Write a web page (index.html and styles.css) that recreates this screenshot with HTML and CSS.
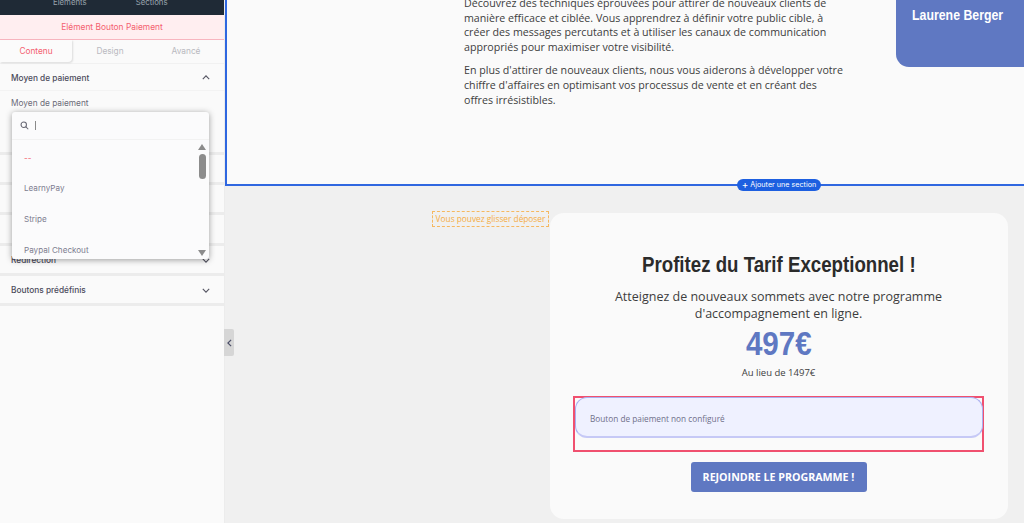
FILE: index.html
```html
<!DOCTYPE html>
<html lang="fr">
<head>
<meta charset="utf-8">
<title>Éditeur</title>
<link rel="stylesheet" href="styles.css">
</head>
<body>
<div class="app">
  <aside class="sidebar">
    <div class="topnav"><span>Eléments</span><span>Sections</span></div>
    <div class="banner">Elément Bouton Paiement</div>
    <div class="tabs">
      <div class="tab active">Contenu</div>
      <div class="tab">Design</div>
      <div class="tab">Avancé</div>
    </div>
    <div class="acc open">
      <span>Moyen de paiement</span>
      <svg class="chev" viewBox="0 0 10 6"><path d="M1 5l4-4 4 4"/></svg>
    </div>
    <div class="field">Moyen de paiement</div>
    <div class="row h1"></div>
    <div class="row"></div>
    <div class="row"></div>
    <div class="row"></div>
    <div class="row acc"><span>Redirection</span><svg class="chev" viewBox="0 0 10 6"><path d="M1 1l4 4 4-4"/></svg></div>
    <div class="row acc"><span>Boutons prédéfinis</span><svg class="chev" viewBox="0 0 10 6"><path d="M1 1l4 4 4-4"/></svg></div>

    <div class="dropdown">
      <div class="search">
        <svg class="mag" viewBox="0 0 12 12"><circle cx="5" cy="5" r="3.6"/><path d="M7.6 7.6L11 11"/></svg>
        <span class="caret"></span>
      </div>
      <div class="list">
        <div class="opt none">--</div>
        <div class="opt">LearnyPay</div>
        <div class="opt">Stripe</div>
        <div class="opt">Paypal Checkout</div>
      </div>
      <div class="scroll">
        <span class="arrow up"></span>
        <span class="thumb"></span>
        <span class="arrow down"></span>
      </div>
    </div>
  </aside>

  <main class="canvas">
    <button class="toggle" type="button" aria-label="Réduire">
      <svg viewBox="0 0 6 10"><path d="M5 1L1 5l4 4"/></svg>
    </button>
    <section class="top">
      <div class="copy">
        <p>Découvrez des techniques éprouvées pour attirer de nouveaux clients de manière efficace et ciblée. Vous apprendrez à définir votre public cible, à créer des messages percutants et à utiliser les canaux de communication appropriés pour maximiser votre visibilité.</p>
        <p>En plus d'attirer de nouveaux clients, nous vous aiderons à développer votre chiffre d'affaires en optimisant vos processus de vente et en créant des offres irrésistibles.</p>
      </div>
      <div class="person"><span class="narrow">Laurene Berger</span></div>
      <div class="add"><span class="plus">+</span> Ajouter une section</div>
    </section>
    <section class="lower">
      <div class="tag">Vous pouvez glisser déposer</div>
      <div class="card">
        <h2>Profitez du Tarif Exceptionnel !</h2>
        <p class="sub">Atteignez de nouveaux sommets avec notre programme d'accompagnement en ligne.</p>
        <div class="price">497€</div>
        <div class="old">Au lieu de 1497€</div>
        <div class="frame"><div class="paybox">Bouton de paiement non configuré</div></div>
        <a class="cta">REJOINDRE LE PROGRAMME !</a>
      </div>
    </section>
  </main>
</div>
</body>
</html>
```
FILE: styles.css
```css
* { box-sizing: border-box; }
html, body { margin: 0; height: 100%; overflow: hidden; }
body { font-family: "Open Sans", sans-serif; background: #f0f0f0; }
.app { display: flex; height: 523px; }

.sidebar {
  position: relative;
  flex: 0 0 225px;
  background: #fafafa;
  border-right: 1px solid #ececec;
  font-family: Inter, sans-serif;
  font-size: 8.3px;
  color: #50505f;
}
.topnav {
  height: 15px;
  background: #1f2a36;
  color: #9aa3ad;
  display: flex;
  line-height: 5px;
  padding-left: 53px;
  gap: 49px;
  font-size: 7.8px;
  overflow: hidden;
}
.banner {
  height: 25px;
  background: #ffeef0;
  border-bottom: 1px solid #f8b5bf;
  color: #f4606f;
  text-align: center;
  line-height: 24px;
  font-size: 8.4px;
}
.tabs { display: flex; height: 24px; border-bottom: 1px solid #f1f1f1; }
.tab { flex: 0 0 76px; text-align: center; line-height: 22px; color: #b9b9c0; }
.tab.active {
  flex-basis: 72px;
  color: #f4606f;
  background: #fbfbfb;
  border-radius: 0 0 4px 0;
  box-shadow: 1px 1px 2px rgba(0, 0, 0, .12);
  height: 22px;
}
.acc {
  display: flex;
  align-items: center;
  justify-content: space-between;
  padding: 0 14px 0 11px;
  font-weight: 500;
  font-size: 8.3px;
  color: #4b4b5a;
}
.acc.open { height: 27px; padding-top: 1px; border-bottom: 1px solid #f3f3f3; }
.chev { width: 8px; height: 5px; fill: none; stroke: #555562; stroke-width: 1.4; }
.field { height: 40px; padding: 7px 11px 0; color: #6b6b78; }
.row { height: 30.2px; border-bottom: 3px solid #ececec; }
.row.h1 { height: 24px; }
.row.acc { padding-top: 2px; }

.dropdown {
  position: absolute;
  left: 12px;
  top: 112px;
  width: 197px;
  height: 147px;
  background: #fbfbfc;
  border-radius: 3px;
  box-shadow: 0 1px 6px rgba(0, 0, 0, .38);
  overflow: hidden;
}
.search {
  display: flex;
  align-items: center;
  gap: 6px;
  height: 28px;
  padding-left: 8px;
  border-bottom: 1px solid #f2f2f2;
}
.mag { width: 9px; height: 9px; fill: none; stroke: #666672; stroke-width: 1.4; }
.caret { width: 1px; height: 9px; background: #8a8a8a; }
.opt { height: 31px; padding-left: 12px; line-height: 31px; font-size: 8.1px; color: #7d7d90; }
.opt.none { color: #f4606f; line-height: 33px; }
.list { padding-top: 2px; }
.scroll {
  position: absolute;
  right: 1px;
  top: 28px;
  bottom: 0;
  width: 12px;
  display: flex;
  flex-direction: column;
  align-items: center;
}
.arrow { width: 0; height: 0; border-left: 4px solid transparent; border-right: 4px solid transparent; }
.arrow.up { border-bottom: 6px solid #8c8c8c; margin-top: 4px; }
.arrow.down { border-top: 6px solid #8c8c8c; margin-top: auto; margin-bottom: 3px; }
.thumb { width: 7px; height: 25px; border-radius: 4px; background: #8c8c8c; margin-top: 4px; }

.canvas { position: relative; flex: 1; min-width: 0; }
.toggle {
  position: absolute;
  left: -1px;
  top: 329px;
  width: 10px;
  height: 27px;
  padding: 0;
  border: 0;
  border-radius: 0 2px 2px 0;
  background: #d6d6d6;
  display: flex;
  align-items: center;
  justify-content: center;
  z-index: 2;
}
.toggle svg { width: 5px; height: 8px; fill: none; stroke: #4c4f68; stroke-width: 1.5; }

.top {
  position: relative;
  height: 186px;
  background: #fafafa;
  border-left: 2px solid #2f67e0;
  border-bottom: 2px solid #2f67e0;
  display: flex;
  justify-content: space-between;
  align-items: flex-start;
  padding-left: 237px;
}
.copy {
  width: 384px;
  margin-top: -4px;
  font-size: 10.67px;
  line-height: 14.6px;
  color: #3d3d3d;
}
.copy p { margin: 0 0 9px; }
.person {
  width: 128px;
  height: 67px;
  padding-right: 4px;
  background: #5f78c2;
  border-radius: 0 0 0 13px;
  color: #fff;
  font-family: "Liberation Sans", sans-serif;
  font-weight: 700;
  font-size: 14.5px;
  text-align: center;
  line-height: 30px;
}
.narrow { display: inline-block; transform: scaleX(.85); white-space: nowrap; }
.add {
  position: absolute;
  left: 510px;
  top: 179px;
  width: 84px;
  height: 12px;
  border-radius: 6px;
  background: #1d5fe0;
  color: #fff;
  font-family: Inter, sans-serif;
  font-size: 7.2px;
  line-height: 12px;
  text-align: center;
  white-space: nowrap;
}
.plus { font-size: 10px; line-height: 10px; vertical-align: -1px; }

.lower {
  display: flex;
  align-items: flex-start;
  padding: 27px 16px 0 207px;
}
.tag {
  flex: none;
  width: 117px;
  height: 16px;
  margin-top: -2px;
  border: 1px dashed #f6b860;
  color: #f5ad45;
  font-size: 8.3px;
  line-height: 14px;
  text-align: center;
  white-space: nowrap;
}
.card {
  flex: none;
  width: 458px;
  height: 306px;
  margin-left: 1px;
  background: #fafafa;
  border-radius: 14px;
  padding: 36px 24px 0 23px;
  display: flex;
  flex-direction: column;
  align-items: center;
  text-align: center;
}
.card h2 {
  margin: 0;
  font-family: "Liberation Sans", sans-serif;
  font-weight: 700;
  font-size: 22.5px;
  line-height: 32px;
  color: #2b2b2b;
  white-space: nowrap;
  transform: scaleX(.83);
}
.sub {
  margin: 7px 0 0;
  width: 360px;
  font-size: 12.5px;
  line-height: 17px;
  color: #3d3d3d;
}
.price {
  margin-top: 2px;
  font-family: "Liberation Sans", sans-serif;
  font-weight: 700;
  font-size: 34px;
  line-height: 38px;
  color: #5f78c2;
  transform: scaleX(.87);
}
.old { margin-top: 4px; font-size: 9.5px; line-height: 13px; color: #3d3d3d; }
.frame {
  align-self: stretch;
  height: 56px;
  margin-top: 17px;
  padding: 1px 1px 0 1px;
  border: 2px solid #f0506f;
}
.paybox {
  height: 41px;
  margin: -2px -2px 0 -1px;
  background: #eff1ff;
  border: 1px solid #a9aff0;
  border-bottom: 2px solid #c6c9f6;
  border-radius: 12px;
  padding-left: 14px;
  text-align: left;
  font-size: 8.25px;
  line-height: 41px;
  color: #70708a;
}
.cta {
  margin-top: 10px;
  width: 176px;
  height: 30px;
  border-radius: 3px;
  background: #5f78c2;
  color: #fff;
  font-weight: 700;
  font-size: 10.67px;
  line-height: 30px;
}
```
